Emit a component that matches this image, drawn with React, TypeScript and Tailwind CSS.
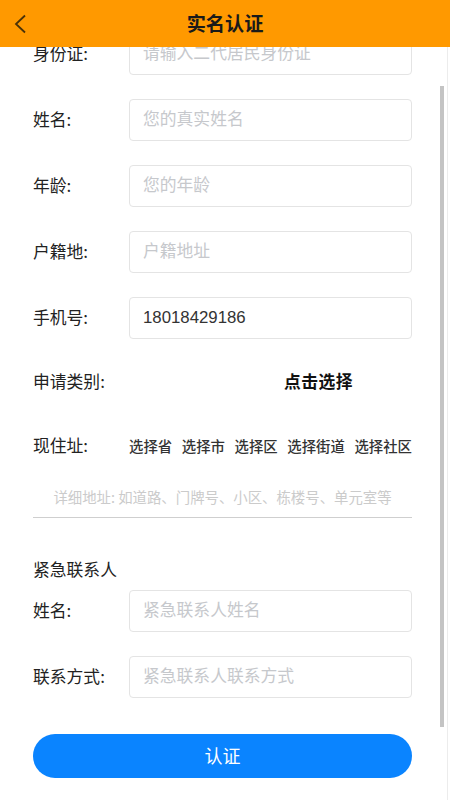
import React from "react";

const font = { fontFamily: '"Noto Sans CJK SC", "Noto Sans", sans-serif' };
const inputFont = { fontFamily: '"Liberation Sans", "Noto Sans CJK SC", sans-serif' };

const FieldRow = ({ label, placeholder, value }: { label: string; placeholder: string; value?: string }) => (
  <div className="flex flex-row items-center h-[42px]">
    <p className="w-[96px] text-[16.8px] text-[#222]">{label}</p>
    <input
      className="flex-1 h-[42px] border border-[#e4e4e4] rounded-[4px] px-[13px] text-[16.8px] text-[#333] placeholder:text-[#c6c8cc] outline-none"
      style={inputFont}
      placeholder={placeholder}
      defaultValue={value}
    />
  </div>
);

export default function App() {
  return (
    <div className="relative w-[450px] h-[800px] bg-white overflow-hidden" style={font}>
      <div className="absolute top-0 left-0 right-0 h-[47px] bg-[#ff9900] flex flex-row items-center z-10">
        <svg className="ml-[13px]" width="14" height="20" viewBox="0 0 14 20" fill="none">
          <path d="M12 1.5 L3 10 L12 18.5" stroke="#4a3208" strokeWidth="1.8" />
        </svg>
        <h1 className="flex-1 text-center text-[19.2px] font-bold text-[#1a1a1a] mr-[27px]">实名认证</h1>
      </div>

      <div className="absolute right-[6px] top-[86px] h-[641px] w-[4px] bg-[#c4c4c4]" />
      <div className="absolute right-[2px] top-[47px] bottom-0 w-px bg-[#ececec]" />

      <div className="flex flex-col pt-[33px] pl-[33px] pr-[38px]">
        <div className="flex flex-col gap-[24px]">
          <FieldRow label="身份证:" placeholder="请输入二代居民身份证" />
          <FieldRow label="姓名:" placeholder="您的真实姓名" />
          <FieldRow label="年龄:" placeholder="您的年龄" />
          <FieldRow label="户籍地:" placeholder="户籍地址" />
          <FieldRow label="手机号:" value="18018429186" placeholder="" />
        </div>

        <div className="flex flex-row items-center h-[42px] mt-[22px]">
          <p className="w-[96px] text-[16.8px] text-[#222]">申请类别:</p>
          <p className="ml-[155px] text-[16.8px] font-bold tracking-[0.5px] text-[#111]">点击选择</p>
        </div>

        <div className="flex flex-row items-center h-[42px] mt-[22px]">
          <p className="w-[96px] text-[16.8px] text-[#222]">现住址:</p>
          <div className="flex-1 flex flex-row justify-between text-[14.4px] font-medium text-[#333]">
            <span>选择省</span>
            <span>选择市</span>
            <span>选择区</span>
            <span>选择街道</span>
            <span>选择社区</span>
          </div>
        </div>

        <div className="mt-[19px] border-b border-[#cfcfcf] pb-[9px] text-center text-[14.4px] text-[#cbcbcb]">
          详细地址: 如道路、门牌号、小区、栋楼号、单元室等
        </div>

        <p className="mt-[39px] text-[16.8px] text-[#222]">紧急联系人</p>

        <div className="flex flex-col gap-[24px] mt-[8px]">
          <FieldRow label="姓名:" placeholder="紧急联系人姓名" />
          <FieldRow label="联系方式:" placeholder="紧急联系人联系方式" />
        </div>

        <button className="mt-[36px] h-[44px] rounded-full bg-[#0a84ff] text-white text-[18px]">认证</button>
      </div>
    </div>
  );
}
